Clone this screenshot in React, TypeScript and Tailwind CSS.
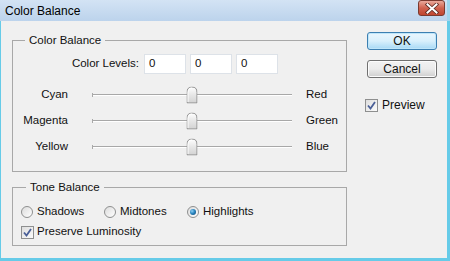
import React from "react";

const font = { fontFamily: '"Liberation Sans", Arial, sans-serif' };

function Thumb() {
  return (
    <svg width="11" height="17" viewBox="0 0 11 17" className="absolute left-1/2 top-1/2 -translate-x-1/2 -translate-y-1/2">
      <defs>
        <linearGradient id="thumbFill" x1="0" y1="0" x2="0" y2="1">
          <stop offset="0" stopColor="#ffffff" />
          <stop offset="0.5" stopColor="#e6e6e6" />
          <stop offset="1" stopColor="#d2d2d2" />
        </linearGradient>
      </defs>
      <path d="M0.5 16.5 V6 Q0.5 0.5 5.5 0.5 Q10.5 0.5 10.5 6 V16.5 Z" fill="url(#thumbFill)" stroke="#8c8c8c" />
      <path d="M1.5 15.5 V6.2 Q1.5 1.5 5.5 1.5" fill="none" stroke="#ffffff" />
    </svg>
  );
}

function SliderRow({ left, right }: { left: string; right: string }) {
  return (
    <div className="flex h-[26px] items-center">
      <span className="w-[55px] text-right">{left}</span>
      <div className="relative ml-[24px] h-[17px] w-[200px]">
        <div className="absolute left-0 right-0 top-[7px] h-[2px] border-t border-[#a8a8a8] border-b border-b-white" />
        <div className="absolute left-0 top-[6px] h-[4px] w-[1px] bg-[#a8a8a8]" />
        <Thumb />
      </div>
      <span className="ml-[14px]">{right}</span>
    </div>
  );
}

function Radio({ checked }: { checked?: boolean }) {
  return (
    <span className="flex h-[12px] w-[12px] items-center justify-center rounded-full border border-[#8e8f8f] bg-gradient-to-br from-[#dcdcdc] to-[#ffffff]">
      {checked && (
        <span className="h-[6px] w-[6px] rounded-full bg-[radial-gradient(circle_at_35%_35%,#8fd0f5_0%,#2a86c0_45%,#0b3f6e_100%)]" />
      )}
    </span>
  );
}

function Check() {
  return (
    <span className="flex h-[13px] w-[13px] items-center justify-center border border-[#8e8f8f] bg-gradient-to-br from-[#dedede] to-[#fbfbfb]">
      <svg width="11" height="11" viewBox="0 0 11 11">
        <path d="M2 5.5 L4.5 8.5 L9 2" fill="none" stroke="#4a5f97" strokeWidth="1.8" />
      </svg>
    </span>
  );
}

function LevelInput({ value }: { value: string }) {
  return (
    <div className="flex h-[20px] w-[42px] items-center border border-[#dde2e8] bg-white pl-[4px]">
      {value}
    </div>
  );
}

export default function App() {
  return (
    <div className="flex h-[261px] w-[450px] flex-col text-[11.5px] text-[#111]" style={font}>
      {/* title bar */}
      <div className="flex h-[21px] items-center justify-between border-r-[3px] border-[#9ed6ee] bg-gradient-to-b from-[#d3e3f4] to-[#bcd3ec] pl-[5px] pr-[2px]">
        <span className="text-[12px] text-black">Color Balance</span>
        <div className="flex h-[16px] w-[27px] items-center justify-center self-start rounded-[3px] border border-[#7b3a2f] bg-gradient-to-b from-[#e9a99c] via-[#d0624f] to-[#c0452f]">
          <svg width="14" height="11" viewBox="0 0 14 11">
            <path d="M2.5 1.5 L11.5 9.5 M11.5 1.5 L2.5 9.5" stroke="#5a2a22" strokeWidth="3.6" strokeLinecap="square" />
            <path d="M2.5 1.5 L11.5 9.5 M11.5 1.5 L2.5 9.5" stroke="#ffffff" strokeWidth="2" strokeLinecap="square" />
          </svg>
        </div>
      </div>

      {/* body */}
      <div className="flex flex-1 items-start border-b-[3px] border-l border-r-[3px] border-[#66cbe8] bg-[#f0f0f0] pl-[11px] pt-[11px]">
        <div className="flex w-[335px] flex-col">
          <fieldset className="border border-[#a8a8a8] p-0 pb-[11px]">
            <legend className="ml-[12px] px-[4px] leading-[16px]">Color Balance</legend>
            <div className="mt-[6px] flex items-center">
              <span className="w-[126px] text-right">Color Levels:</span>
              <div className="ml-[5px] flex gap-[4px]">
                <LevelInput value="0" />
                <LevelInput value="0" />
                <LevelInput value="0" />
              </div>
            </div>
            <div className="mt-[8px] flex flex-col">
              <SliderRow left="Cyan" right="Red" />
              <SliderRow left="Magenta" right="Green" />
              <SliderRow left="Yellow" right="Blue" />
            </div>
          </fieldset>

          <fieldset className="mt-[7px] border border-[#a8a8a8] p-0 pb-[3px]">
            <legend className="ml-[13px] px-[4px] leading-[16px]">Tone Balance</legend>
            <div className="mt-[7px] flex h-[20px] items-center pl-[8px]">
              <div className="flex w-[83px] items-center gap-[4px]">
                <Radio />
                <span>Shadows</span>
              </div>
              <div className="flex w-[83px] items-center gap-[4px]">
                <Radio />
                <span>Midtones</span>
              </div>
              <div className="flex items-center gap-[4px]">
                <Radio checked />
                <span>Highlights</span>
              </div>
            </div>
            <div className="flex h-[20px] items-center gap-[3px] pl-[8px]">
              <Check />
              <span>Preserve Luminosity</span>
            </div>
          </fieldset>
        </div>

        <div className="ml-[20px] flex flex-col">
          <button className="flex h-[18px] w-[70px] items-center justify-center rounded-[3px] border border-[#3c7fb1] bg-gradient-to-b from-[#eaf6fd] via-[#d9f0fc] to-[#a7d9f5] text-[12px] shadow-[inset_0_0_0_1px_#bfe6fa]">
            OK
          </button>
          <button className="mt-[10px] flex h-[18px] w-[70px] items-center justify-center rounded-[3px] border border-[#707070] bg-gradient-to-b from-[#f2f2f2] via-[#ebebeb] to-[#cfcfcf] text-[12px] shadow-[inset_0_0_0_1px_#fcfcfc]">
            Cancel
          </button>
          <div className="-ml-[2px] mt-[18px] flex items-center gap-[4px]">
            <Check />
            <span className="text-[12px]">Preview</span>
          </div>
        </div>
      </div>
    </div>
  );
}
